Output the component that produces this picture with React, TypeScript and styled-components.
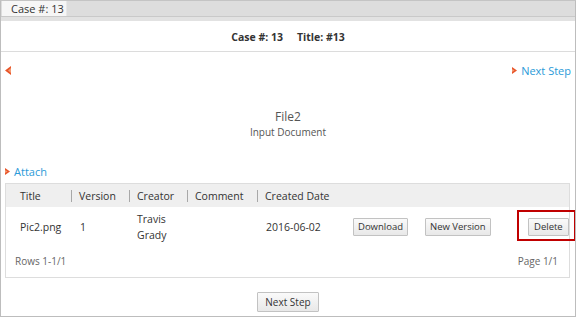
import styled, { createGlobalStyle } from "styled-components";

const GlobalStyle = createGlobalStyle`
  html, body {
    margin: 0;
    padding: 0;
    background: #ffffff;
  }
  body {
    font-family: "Open Sans", "Liberation Sans", sans-serif;
    font-size: 11px;
    color: #333;
  }
`;

interface arrowProps {
  dir: "left" | "right";
}

const Arrow = ({ dir }: arrowProps): JSX.Element => (
  <svg width="6" height="9" viewBox="0 0 6 9">
    {dir === "right" ? (
      <>
        <path d="M0 1 L5 4.5 L0 8 Z" fill="#e8562a" />
        <path d="M0 3 L2.5 4.5 L0 6 Z" fill="#f49b73" />
      </>
    ) : (
      <>
        <path d="M6 0 L6 9 L0 4.5 Z" fill="#e8562a" />
        <path d="M6 2 L6 7 L3 4.5 Z" fill="#f49b73" />
      </>
    )}
  </svg>
);

const App = (): JSX.Element => {
  return (
    <Frame>
      <GlobalStyle />
      <TabBar>
        <Tab>Case #: 13</Tab>
      </TabBar>
      <TabStrip />
      <CaseHeader>
        <span>Case #: 13</span>
        <span>Title: #13</span>
      </CaseHeader>
      <Body>
        <NavRow>
          <NavLink>
            <Arrow dir="left" />
          </NavLink>
          <NavLink>
            <Arrow dir="right" />
            Next Step
          </NavLink>
        </NavRow>
        <DocTitle>
          <h2>File2</h2>
          <p>Input Document</p>
        </DocTitle>
        <AttachLink>
          <Arrow dir="right" />
          Attach
        </AttachLink>
        <GridBox>
          <Grid>
            <colgroup>
              <col style={{ width: 65 }} />
              <col style={{ width: 58 }} />
              <col style={{ width: 58 }} />
              <col style={{ width: 70 }} />
              <col style={{ width: 88 }} />
              <col style={{ width: 67 }} />
              <col style={{ width: 95 }} />
              <col style={{ width: 62 }} />
            </colgroup>
            <thead>
              <tr>
                <HeadCell $first>Title</HeadCell>
                <HeadCell>Version</HeadCell>
                <HeadCell>Creator</HeadCell>
                <HeadCell>Comment</HeadCell>
                <HeadCell>Created Date</HeadCell>
                <HeadCell $plain />
                <HeadCell $plain />
                <HeadCell $plain />
              </tr>
            </thead>
            <tbody>
              <tr>
                <Cell $pad={14}>Pic2.png</Cell>
                <Cell $pad={9}>1</Cell>
                <Cell $pad={8}>
                  Travis
                  <br />
                  Grady
                </Cell>
                <Cell $pad={9}></Cell>
                <Cell $pad={9}>2016-06-02</Cell>
                <Cell $pad={8}>
                  <Button>Download</Button>
                </Cell>
                <Cell $pad={13}>
                  <Button>New Version</Button>
                </Cell>
                <Cell $pad={21}>
                  <Highlighted>
                    <Button $wide>Delete</Button>
                  </Highlighted>
                </Cell>
              </tr>
            </tbody>
          </Grid>
          <GridFooter>
            <span>Rows 1-1/1</span>
            <span>Page 1/1</span>
          </GridFooter>
        </GridBox>
        <Actions>
          <Button $big>Next Step</Button>
        </Actions>
      </Body>
    </Frame>
  );
};

const Frame = styled.div`
  width: 576px;
  height: 317px;
  box-sizing: border-box;
  border: 1px solid #bdbdbd;
  border-top: 1px solid #c4c4c4;
  display: flex;
  flex-direction: column;
  overflow: hidden;
`;

const TabBar = styled.div`
  height: 15px;
  background-color: #dddddd;
  border-bottom: 1px solid #c9c9c9;
  display: flex;
  align-items: flex-end;
  padding-left: 1px;
`;

const Tab = styled.div`
  height: 15px;
  width: 65px;
  box-sizing: border-box;
  background-color: #f6f6f6;
  border-right: 1px solid #e8e8e8;
  color: #333;
  font-size: 11px;
  line-height: 15px;
  padding-left: 9px;
`;

const TabStrip = styled.div`
  height: 4px;
  background-color: #e2e2e2;
`;

const CaseHeader = styled.div`
  height: 31px;
  border-bottom: 1px solid #dcdcdc;
  display: flex;
  justify-content: center;
  align-items: center;
  gap: 14px;
  font-weight: 700;
  font-size: 10.5px;
  color: #333;
  padding-top: 1px;
  box-sizing: border-box;
`;

const Body = styled.div`
  padding: 0 4px 0 4px;
  display: flex;
  flex-direction: column;
`;

const NavRow = styled.div`
  display: flex;
  justify-content: space-between;
  align-items: center;
  height: 16px;
  margin-top: 10px;
`;

const NavLink = styled.a`
  display: flex;
  align-items: center;
  gap: 3px;
  color: #2a9ad8;
  font-size: 11px;
  cursor: pointer;
`;

const DocTitle = styled.div`
  margin-top: 31px;
  text-align: center;
  color: #555;

  h2 {
    margin: 0;
    font-size: 12px;
    font-weight: 400;
    line-height: 16px;
  }

  p {
    margin: 0;
    font-size: 10px;
    line-height: 14px;
  }
`;

const AttachLink = styled(NavLink)`
  margin-top: 25px;
  height: 14px;
`;

const GridBox = styled.div`
  margin-top: 5px;
  margin-right: 1px;
  border: 1px solid #dddddd;
  display: flex;
  flex-direction: column;
`;

const Grid = styled.table`
  width: 100%;
  table-layout: fixed;
  border-collapse: collapse;
  font-size: 10.5px;
  color: #333;
`;

const HeadCell = styled.th<{ $first?: boolean; $plain?: boolean }>`
  height: 23px;
  padding: 0 0 0 ${(p) => (p.$first ? 14 : 8)}px;
  background-color: #efefef;
  font-weight: 400;
  text-align: left;
  position: relative;

  &::before {
    content: "";
    display: ${(p) => (p.$first || p.$plain ? "none" : "block")};
    position: absolute;
    left: 0;
    top: 6px;
    height: 12px;
    border-left: 1px solid #a8a8a8;
  }
`;

const Cell = styled.td<{ $pad: number }>`
  height: 40px;
  padding: 0 0 0 ${(p) => p.$pad}px;
  vertical-align: middle;
  line-height: 16px;
  white-space: nowrap;
`;

const Highlighted = styled.div`
  position: relative;
  display: inline-flex;

  &::after {
    content: "";
    position: absolute;
    left: -11px;
    right: -7px;
    top: -8px;
    bottom: -5px;
    border: 2px solid #c00000;
  }
`;

const Button = styled.button<{ $big?: boolean; $wide?: boolean }>`
  font-family: "Open Sans", "Liberation Sans", sans-serif;
  font-size: ${(p) => (p.$big ? 10 : 9.5)}px;
  color: #333;
  height: ${(p) => (p.$big ? 20 : 18)}px;
  padding: 0 ${(p) => (p.$big ? 7 : p.$wide ? 5 : 4)}px;
  border: 1px solid #c2c2c2;
  border-radius: 1px;
  background: linear-gradient(#fafafa, #e8e8e8);
  cursor: pointer;
  line-height: 16px;
`;

const GridFooter = styled.div`
  display: flex;
  justify-content: space-between;
  height: 28px;
  align-items: center;
  padding: 0 11px 2px 9px;
  color: #666;
  font-size: 10px;
`;

const Actions = styled.div`
  display: flex;
  justify-content: center;
  margin-top: 14px;
`;

export default App;
